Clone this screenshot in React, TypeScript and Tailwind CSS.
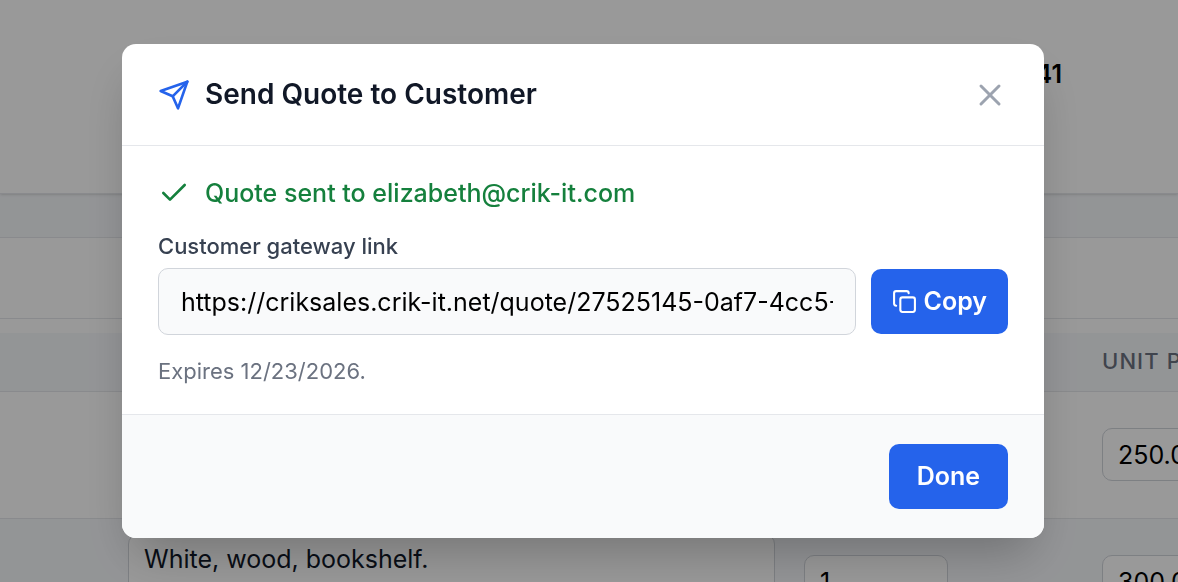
import { Check, Copy, X } from "lucide-react";
import { FiSend } from "react-icons/fi";

const rows = [
  { description: "", qty: "1", price: "250.00" },
  { description: "White, wood, bookshelf.", qty: "1", price: "300.00" },
];

const fieldClass =
  "block rounded-[10px] border border-[#d1d5db] bg-white px-[15px] text-[25px] leading-8 text-black";

function QuotePage() {
  return (
    <div className="w-full bg-[#f6f8fb]">
      <header className="flex h-[194px] justify-end border-b border-[#e5e7eb] bg-white pt-[58px] pr-[116px] shadow-sm">
        <span className="text-[25px] leading-8 font-semibold text-black">41</span>
      </header>

      <main className="mt-[43px] border-t border-[#e5e7eb] bg-white">
        <div className="h-[81px] border-b border-[#e5e7eb]" />
        <table className="mt-[14px] w-[1500px] table-fixed">
          <colgroup>
            <col className="w-[113px]" />
            <col className="w-[677px]" />
            <col className="w-[297px]" />
            <col />
          </colgroup>
          <thead>
            <tr className="h-[58px] border-b border-[#e5e7eb] bg-[#f6f8fb] text-left text-[22px] tracking-wider text-[#6b7280] uppercase">
              <th />
              <th className="px-[15px] font-medium">Description</th>
              <th className="px-[14px] font-medium">Qty</th>
              <th className="px-[15px] font-medium">Unit Price</th>
            </tr>
          </thead>
          <tbody>
            {rows.map((row) => (
              <tr key={row.price} className="border-b border-[#e5e7eb] even:bg-[#f6f8fb]">
                <td />
                <td className="px-[15px] py-[15px]">
                  <textarea
                    aria-label="Description"
                    defaultValue={row.description}
                    className={`${fieldClass} h-24 w-full resize-none py-2 text-gray-900`}
                  />
                </td>
                <td className="px-[14px]">
                  <input aria-label="Quantity" defaultValue={row.qty} className={`${fieldClass} h-[53px] w-36`} />
                </td>
                <td className="px-[15px]">
                  <input aria-label="Unit price" defaultValue={row.price} className={`${fieldClass} h-[53px] w-52`} />
                </td>
              </tr>
            ))}
          </tbody>
        </table>
      </main>
    </div>
  );
}

function SendQuoteDialog() {
  return (
    <div className="fixed inset-0 flex items-center justify-center bg-black/40 pr-3">
      <div
        role="dialog"
        aria-labelledby="dialog-title"
        className="w-full max-w-[922px] overflow-hidden rounded-[14px] bg-white shadow-2xl"
      >
        <div className="flex items-center justify-between border-b border-gray-200 px-9 py-8">
          <div className="flex items-center gap-[15px]">
            <FiSend className="size-8 text-[#2563eb]" />
            <h2 id="dialog-title" className="text-[28px] leading-[37px] font-semibold text-[#111827]">
              Send Quote to Customer
            </h2>
          </div>
          <button type="button" aria-label="Close" className="text-[#9ca3af]">
            <X className="size-9" />
          </button>
        </div>

        <div className="px-9 pt-[29px] pb-[27px]">
          <p className="flex items-center gap-[15px] text-[25px] leading-9 font-medium text-[#15803d]">
            <Check className="size-8" />
            Quote sent to elizabeth@crik-it.com
          </p>
          <label htmlFor="gateway-link" className="mt-[19px] block text-[22px] leading-8 font-medium text-[#374151]">
            Customer gateway link
          </label>
          <div className="mt-1.5 flex items-center gap-[15px]">
            <input
              id="gateway-link"
              readOnly
              defaultValue="https://criksales.crik-it.net/quote/27525145-0af7-4cc5-9b1e-6d2f8c3a7e54"
              className="h-[67px] min-w-0 flex-1 rounded-[10px] border border-[#d1d5db] bg-[#f9fafb] px-[22px] text-[25px] text-black"
            />
            <button
              type="button"
              className="flex h-[65px] items-center gap-[7px] rounded-[10px] bg-[#2563eb] px-[21px] text-[25px] font-semibold text-white"
            >
              <Copy className="size-[25px]" />
              Copy
            </button>
          </div>
          <p className="mt-5 text-[22px] leading-8 text-[#6b7280]">Expires 12/23/2026.</p>
        </div>

        <div className="flex justify-end border-t border-gray-200 bg-[#f9fafb] px-9 py-[29px]">
          <button type="button" className="h-[65px] rounded-[10px] bg-[#2563eb] px-7 text-[25px] font-semibold text-white">
            Done
          </button>
        </div>
      </div>
    </div>
  );
}

export default function App() {
  return (
    <div className="h-screen overflow-hidden font-['Inter',sans-serif]">
      <QuotePage />
      <SendQuoteDialog />
    </div>
  );
}
